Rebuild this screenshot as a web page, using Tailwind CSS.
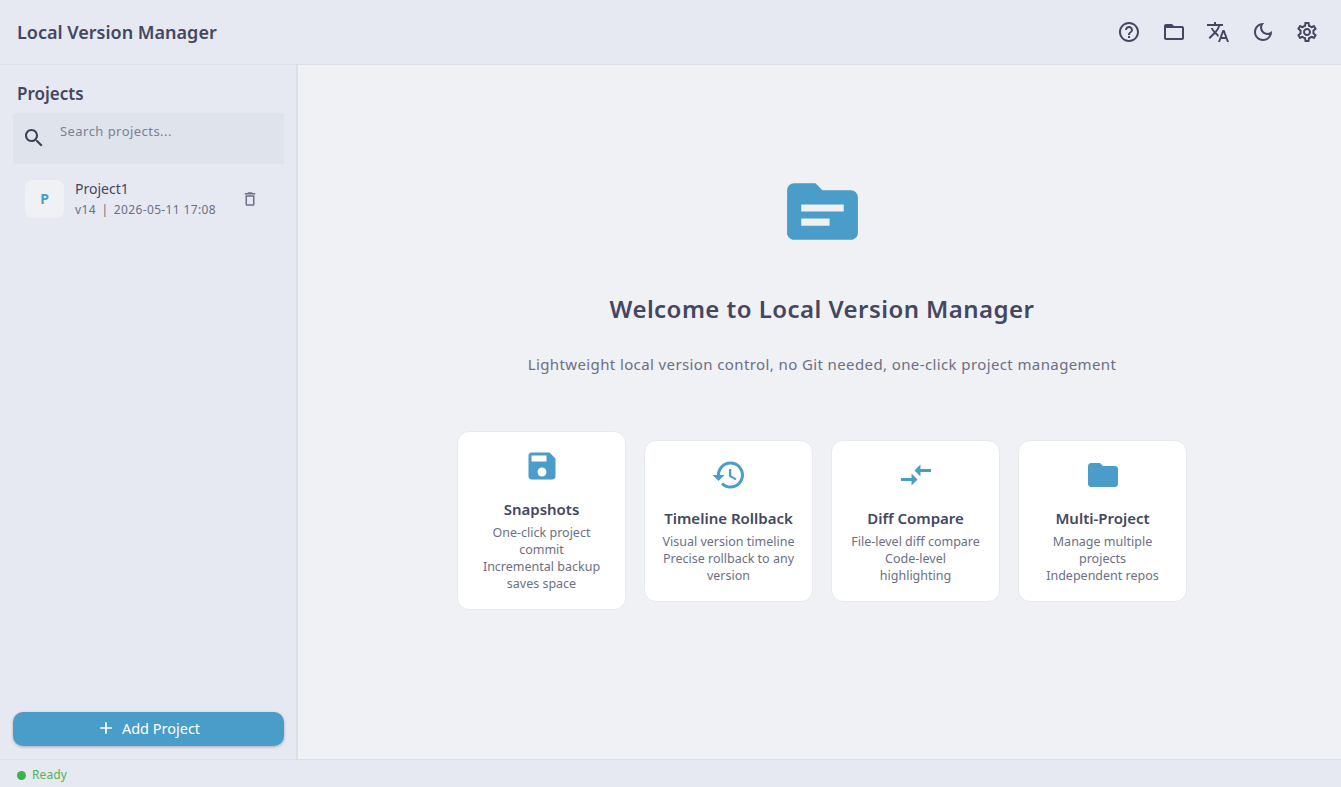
<!DOCTYPE html>
<html lang="en">
<head>
  <meta charset="UTF-8" />
  <title>Local Version Manager</title>
  <script src="https://cdn.jsdelivr.net/npm/@tailwindcss/browser@4"></script>
</head>
<body class="h-[787px] w-[1341px] overflow-hidden flex flex-col bg-[#eff1f5] text-[#44475f] font-['Noto_Sans',sans-serif]">

  <!-- Top bar -->
  <header class="h-[65px] shrink-0 flex items-center justify-between bg-[#e6e9f1] border-b border-[#dce0e8] pl-[17px] pr-[22px]">
    <h1 class="text-[18px] font-semibold">Local Version Manager</h1>
    <div class="flex items-center gap-[20.5px]">
      <svg class="w-6 h-6 fill-current" viewBox="0 0 24 24"><path d="M11 18h2v-2h-2v2zm1-16C6.48 2 2 6.48 2 12s4.48 10 10 10 10-4.48 10-10S17.52 2 12 2zm0 18c-4.41 0-8-3.59-8-8s3.59-8 8-8 8 3.59 8 8-3.59 8-8 8zm0-14c-2.21 0-4 1.79-4 4h2c0-1.1.9-2 2-2s2 .9 2 2c0 2-3 1.75-3 5h2c0-2.25 3-2.5 3-5 0-2.21-1.79-4-4-4z"/></svg>
      <svg class="w-6 h-6 fill-current" viewBox="0 0 24 24"><path d="M20 6h-8l-2-2H4c-1.1 0-1.99.9-1.99 2L2 18c0 1.1.9 2 2 2h16c1.1 0 2-.9 2-2V8c0-1.1-.9-2-2-2zm0 12H4V8h16v10z"/></svg>
      <svg class="w-6 h-6 fill-current" viewBox="0 0 24 24"><path d="M12.87 15.07l-2.54-2.51.03-.03c1.74-1.94 2.98-4.17 3.71-6.53H17V4h-7V2H8v2H1v1.99h11.17C11.5 7.92 10.44 9.75 9 11.35 8.07 10.32 7.3 9.19 6.69 8h-2c.73 1.63 1.73 3.17 2.98 4.56l-5.09 5.02L4 19l5-5 3.11 3.11.76-2.04zM18.5 10h-2L12 22h2l1.12-3h4.75L21 22h2l-4.5-12zm-2.62 7l1.62-4.33L19.12 17h-3.24z"/></svg>
      <svg class="w-6 h-6 fill-current" viewBox="0 0 24 24"><path d="M9.37 5.51c-.18.64-.27 1.31-.27 1.99 0 4.08 3.32 7.4 7.4 7.4.68 0 1.35-.09 1.99-.27C17.45 17.19 14.93 19 12 19c-3.86 0-7-3.14-7-7 0-2.93 1.81-5.45 4.37-6.49zM12 3c-4.97 0-9 4.03-9 9s4.03 9 9 9 9-4.03 9-9c0-.46-.04-.92-.1-1.36-.98 1.37-2.58 2.26-4.4 2.26-2.98 0-5.4-2.42-5.4-5.4 0-1.81.89-3.42 2.26-4.4-.44-.06-.9-.1-1.36-.1z"/></svg>
      <svg class="w-6 h-6 fill-current" viewBox="0 0 24 24"><path d="M19.43 12.98c.04-.32.07-.64.07-.98 0-.34-.03-.66-.07-.98l2.11-1.65c.19-.15.24-.42.12-.64l-2-3.46c-.09-.16-.26-.25-.44-.25-.06 0-.12.01-.17.03l-2.49 1c-.52-.4-1.08-.73-1.69-.98l-.38-2.65C14.46 2.18 14.25 2 14 2h-4c-.25 0-.46.18-.49.42l-.38 2.65c-.61.25-1.17.59-1.69.98l-2.49-1c-.06-.02-.12-.03-.18-.03-.17 0-.34.09-.43.25l-2 3.46c-.13.22-.07.49.12.64l2.11 1.65c-.04.32-.07.65-.07.98 0 .33.03.66.07.98l-2.11 1.65c-.19.15-.24.42-.12.64l2 3.46c.09.16.26.25.44.25.06 0 .12-.01.17-.03l2.49-1c.52.4 1.08.73 1.69.98l.38 2.65c.03.24.24.42.49.42h4c.25 0 .46-.18.49-.42l.38-2.65c.61-.25 1.17-.59 1.69-.98l2.49 1c.06.02.12.03.18.03.17 0 .34-.09.43-.25l2-3.46c.12-.22.07-.49-.12-.64l-2.11-1.65zm-1.98-1.71c.04.31.05.52.05.73 0 .21-.02.43-.05.73l-.14 1.13.89.7 1.08.84-.7 1.21-1.27-.51-1.04-.42-.9.68c-.43.32-.84.56-1.25.73l-1.06.43-.16 1.13-.2 1.35h-1.4l-.19-1.35-.16-1.13-1.06-.43c-.43-.18-.83-.41-1.23-.71l-.91-.7-1.06.43-1.27.51-.7-1.21 1.08-.84.89-.7-.14-1.13c-.03-.31-.05-.54-.05-.74s.02-.43.05-.73l.14-1.13-.89-.7-1.08-.84.7-1.21 1.27.51 1.04.42.9-.68c.43-.32.84-.56 1.25-.73l1.06-.43.16-1.13.2-1.35h1.39l.19 1.35.16 1.13 1.06.43c.43.18.83.41 1.23.71l.91.7 1.06-.43 1.27-.51.7 1.21-1.07.85-.89.7.14 1.13zM12 8c-2.21 0-4 1.79-4 4s1.79 4 4 4 4-1.79 4-4-1.79-4-4-4zm0 6c-1.1 0-2-.9-2-2s.9-2 2-2 2 .9 2 2-.9 2-2 2z"/></svg>
    </div>
  </header>

  <div class="flex-1 flex min-h-0">
    <!-- Sidebar -->
    <aside class="w-[298px] shrink-0 flex flex-col bg-[#e6e9f1] border-r-2 border-[#dce0e8] pl-[13px] pr-[12px] pb-[13px]">
      <h2 class="text-[17px] font-semibold leading-[23px] pl-[4px] mt-[17px] mb-[8px]">Projects</h2>
      <div class="h-[51px] flex bg-[#dfe3ec] pl-[9px]">
        <svg class="w-6 h-6 mt-[13px] fill-[#3c3f52]" viewBox="0 0 24 24"><path d="M15.5 14h-.79l-.28-.27C15.41 12.59 16 11.11 16 9.5 16 5.91 13.09 3 9.5 3S3 5.91 3 9.5 5.91 16 9.5 16c1.61 0 3.09-.59 4.23-1.57l.27.28v.79l5 4.99L20.49 19l-4.99-5zm-6 0C7.01 14 5 11.99 5 9.5S7.01 5 9.5 5 14 7.01 14 9.5 11.99 14 9.5 14z"/></svg>
        <span class="ml-[14px] mt-[9px] text-[13px] leading-[18px] tracking-[0.45px] text-[#7c7f93]">Search projects...</span>
      </div>
      <div class="flex items-center mt-[15px] pl-[12px]">
        <div class="w-[39px] h-[38px] rounded-lg bg-[#eff1f5] flex items-center justify-center text-[14px] font-bold text-[#4a9cc9]">P</div>
        <div class="ml-[11px] w-[166px]">
          <div class="text-[14px] leading-[19px]">Project1</div>
          <div class="text-[12px] leading-[17px] tracking-[0.35px] text-[#6c6f85] mt-[3px]">v14<span class="mx-[5.5px]">|</span>2026-05-11 17:08</div>
        </div>
        <svg class="w-[18px] h-[18px] fill-[#6c6f85]" viewBox="0 0 24 24"><path d="M6 19c0 1.1.9 2 2 2h8c1.1 0 2-.9 2-2V7H6v12zM8 9h8v10H8V9zm7.5-5l-1-1h-5l-1 1H5v2h14V4z"/></svg>
      </div>
      <button class="mt-auto h-[34px] rounded-[10px] bg-[#4a9cc9] text-white flex items-center justify-center gap-[6px] text-[14.5px] leading-[20px] pb-[2px] pr-[1px] shadow-[0_1px_3px_rgba(76,79,105,0.4)]">
        <svg class="w-5 h-5 fill-white" viewBox="0 0 24 24"><path d="M19 13h-6v6h-2v-6H5v-2h6V5h2v6h6v2z"/></svg>
        Add Project
      </button>
    </aside>

    <!-- Welcome panel -->
    <main class="flex-1 flex flex-col items-center pl-[5px] pt-[104px]">
      <svg class="w-[85px] h-[85px] fill-[#4a9cc9]" viewBox="0 0 24 24"><path d="M20 6h-8l-2-2H4c-1.1 0-1.99.9-1.99 2L2 18c0 1.1.9 2 2 2h16c1.1 0 2-.9 2-2V8c0-1.1-.9-2-2-2zm-6 10H6v-2h8v2zm4-4H6v-2h12v2z"/></svg>
      <h2 class="mt-[37px] text-[24px] leading-[36px] font-semibold tracking-[0.45px]">Welcome to Local Version Manager</h2>
      <p class="mt-[27px] text-[15px] leading-[20px] tracking-[0.39px] text-[#6c6f85]">Lightweight local version control, no Git needed, one-click project management</p>
      <div class="mt-[57px] flex items-center gap-[18px]">
        <div class="w-[169px] rounded-xl bg-white border border-[#e6e9ef] px-[16px] pt-[16px] pb-[17px] text-center">
          <svg class="w-9 h-9 mx-auto fill-[#4a9cc9]" viewBox="0 0 24 24"><path d="M17 3H5c-1.11 0-2 .9-2 2v14c0 1.1.89 2 2 2h14c1.1 0 2-.9 2-2V7l-4-4zm-5 16c-1.66 0-3-1.34-3-3s1.34-3 3-3 3 1.34 3 3-1.34 3-3 3zm3-10H5V5h10v4z"/></svg>
          <h3 class="mt-[15px] text-[15px] leading-[20px] font-semibold">Snapshots</h3>
          <p class="mt-[5px] text-[12.5px] leading-[17px] text-[#6c6f85]">One-click project commit<br />Incremental backup saves space</p>
        </div>
        <div class="w-[169px] rounded-xl bg-white border border-[#e6e9ef] px-[16px] pt-[16px] pb-[17px] text-center">
          <svg class="w-9 h-9 mx-auto fill-[#4a9cc9]" viewBox="0 0 24 24"><path d="M13 3c-4.97 0-9 4.03-9 9H1l3.89 3.89.07.14L9 12H6c0-3.87 3.13-7 7-7s7 3.13 7 7-3.13 7-7 7c-1.93 0-3.68-.79-4.94-2.06l-1.42 1.42C8.27 19.99 10.51 21 13 21c4.97 0 9-4.03 9-9s-4.03-9-9-9zm-1 5v5l4.28 2.54.72-1.21-3.5-2.08V8H12z"/></svg>
          <h3 class="mt-[15px] text-[15px] leading-[20px] font-semibold">Timeline Rollback</h3>
          <p class="mt-[5px] text-[12.5px] leading-[17px] text-[#6c6f85]">Visual version timeline<br />Precise rollback to any version</p>
        </div>
        <div class="w-[169px] rounded-xl bg-white border border-[#e6e9ef] px-[16px] pt-[16px] pb-[17px] text-center">
          <svg class="w-9 h-9 mx-auto fill-[#4a9cc9]" viewBox="0 0 24 24"><path d="M9.01 14H2v2h7.01v3L13 15l-3.99-4v3zm5.98-1v-3H22V8h-7.01V5L11 9l3.99 4z"/></svg>
          <h3 class="mt-[15px] text-[15px] leading-[20px] font-semibold">Diff Compare</h3>
          <p class="mt-[5px] text-[12.5px] leading-[17px] text-[#6c6f85]">File-level diff compare<br />Code-level highlighting</p>
        </div>
        <div class="w-[169px] rounded-xl bg-white border border-[#e6e9ef] px-[16px] pt-[16px] pb-[17px] text-center">
          <svg class="w-9 h-9 mx-auto fill-[#4a9cc9]" viewBox="0 0 24 24"><path d="M10 4H4c-1.1 0-1.99.9-1.99 2L2 18c0 1.1.9 2 2 2h16c1.1 0 2-.9 2-2V8c0-1.1-.9-2-2-2h-8l-2-2z"/></svg>
          <h3 class="mt-[15px] text-[15px] leading-[20px] font-semibold">Multi-Project</h3>
          <p class="mt-[5px] text-[12.5px] leading-[17px] text-[#6c6f85]">Manage multiple projects<br />Independent repos</p>
        </div>
      </div>
    </main>
  </div>

  <!-- Status bar -->
  <footer class="h-[28px] shrink-0 flex items-center gap-[6px] bg-[#e6e9f1] border-t border-[#dce0e8] pl-[17px] pt-[3px]">
    <span class="w-[9px] h-[9px] rounded-full bg-[#40b04a]"></span>
    <span class="text-[12px] tracking-[0.1px] text-[#4fb35a]">Ready</span>
  </footer>

</body>
</html>
